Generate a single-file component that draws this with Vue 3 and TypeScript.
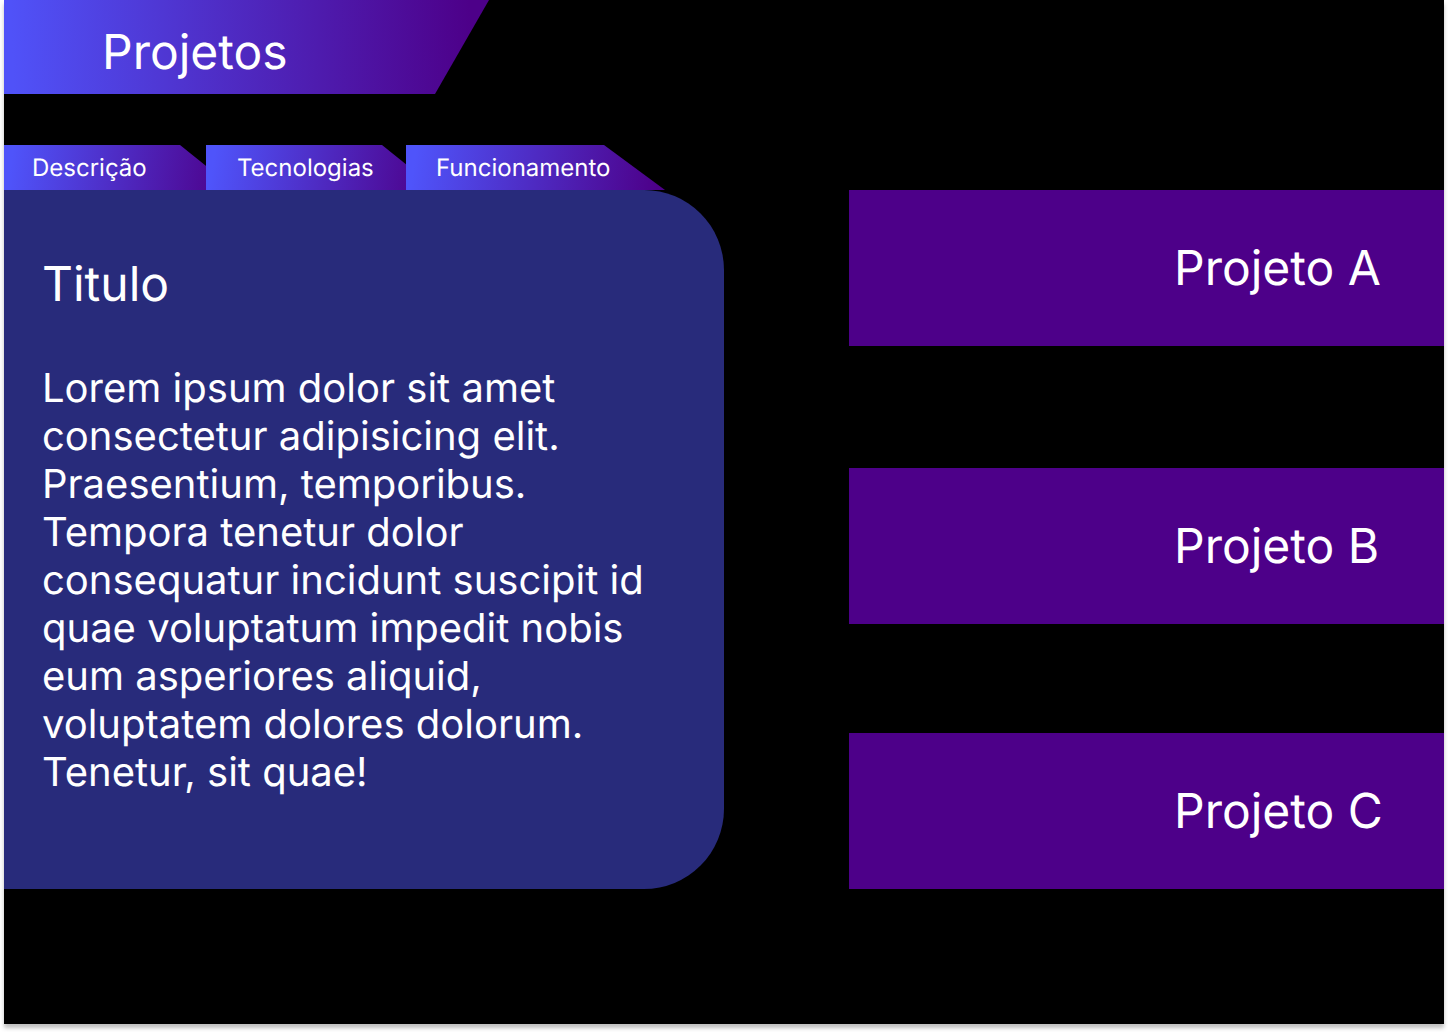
<script setup lang="ts">
import { ref } from 'vue'

interface Tab {
  id: string
  label: string
}

const tabs: Tab[] = [
  { id: 'descricao', label: 'Descrição' },
  { id: 'tecnologias', label: 'Tecnologias' },
  { id: 'funcionamento', label: 'Funcionamento' },
]
const projects: string[] = ['Projeto A', 'Projeto B', 'Projeto C']

const activeTab = ref<string>('descricao')
const activeProject = ref<string>('Projeto A')
</script>

<template>
  <main class="page">
    <header class="banner">
      <h1>Projetos</h1>
    </header>
    <div class="content">
      <section class="details">
        <div class="tabs" role="tablist">
          <button
            v-for="tab in tabs"
            :key="tab.id"
            type="button"
            role="tab"
            class="tab"
            :class="tab.id"
            :aria-selected="activeTab === tab.id"
            @click="activeTab = tab.id"
          >
            {{ tab.label }}
          </button>
        </div>
        <article class="panel" role="tabpanel">
          <h2>Titulo</h2>
          <p>
            Lorem ipsum dolor sit amet consectetur adipisicing elit. Praesentium, temporibus.
            Tempora tenetur dolor consequatur incidunt suscipit id quae voluptatum impedit nobis
            eum asperiores aliquid, voluptatem dolores dolorum. Tenetur, sit quae!
          </p>
        </article>
      </section>
      <nav class="projects" aria-label="Projetos">
        <button
          v-for="project in projects"
          :key="project"
          type="button"
          class="project"
          :aria-pressed="activeProject === project"
          @click="activeProject = project"
        >
          <span>{{ project }}</span>
        </button>
      </nav>
    </div>
  </main>
</template>

<style>
body {
  background: #fff;
}
</style>

<style scoped>
.page {
  box-sizing: border-box;
  min-height: calc(100vh - 8px);
  margin: 0 4px 8px;
  background: #000;
  color: #fff;
  font-family: Inter, sans-serif;
  text-rendering: geometricPrecision;
  box-shadow: 0 4px 4px rgba(0, 0, 0, 0.25);
}

.banner {
  box-sizing: border-box;
  width: 485px;
  height: 94px;
  padding: 23px 0 0 98px;
  background: linear-gradient(88deg, #5052f8 2%, #4d0089 96%);
  clip-path: polygon(0 0, 100% 0, 431px 100%, 0 100%);
}

h1,
h2,
p {
  margin: 0;
  font-weight: 400;
}

h1,
h2 {
  font-size: 48px;
  line-height: 58px;
}

button {
  margin: 0;
  border: 0;
  color: inherit;
  font-family: inherit;
  text-rendering: inherit;
  cursor: pointer;
}

.content {
  display: grid;
  grid-template-columns: 50% 1fr;
  column-gap: 125px;
  padding-top: 51px;
}

.tabs {
  display: flex;
}

.tab {
  flex: none;
  width: 259px;
  height: 45px;
  padding: 0 0 0 28px;
  background: linear-gradient(98deg, #4f54fa 4%, #4d0089 97%);
  clip-path: polygon(0 0, calc(100% - 61px) 0, 100% 100%, 0 100%);
  font-size: 24px;
  line-height: 29px;
  text-align: left;
}

.tab.descricao,
.tab.tecnologias {
  width: 232px;
  clip-path: polygon(0 0, calc(100% - 56px) 0, 100% 100%, 0 100%);
}

.tab.descricao {
  margin-right: -30px;
}

.tab.tecnologias {
  margin-right: -32px;
  padding-left: 31px;
}

.tab.funcionamento {
  padding-left: 30px;
}

.panel {
  box-sizing: border-box;
  min-height: 699px;
  padding: 65px 64px 65px 38px;
  border-radius: 0 80px 80px 0;
  background: #282b7b;
}

.panel p {
  margin-top: 51px;
  font-size: 40px;
  line-height: 48px;
}

.projects {
  display: flex;
  flex-direction: column;
  gap: 109px;
  padding-top: 45px;
}

.project {
  display: flex;
  align-items: center;
  justify-content: flex-end;
  height: 156px;
  padding: 0 61px 0 0;
  background: #4d0089;
  font-size: 48px;
  line-height: 58px;
}

.project:first-child {
  margin-bottom: 13px;
}

.project span {
  width: 209px;
  text-align: left;
}
</style>
